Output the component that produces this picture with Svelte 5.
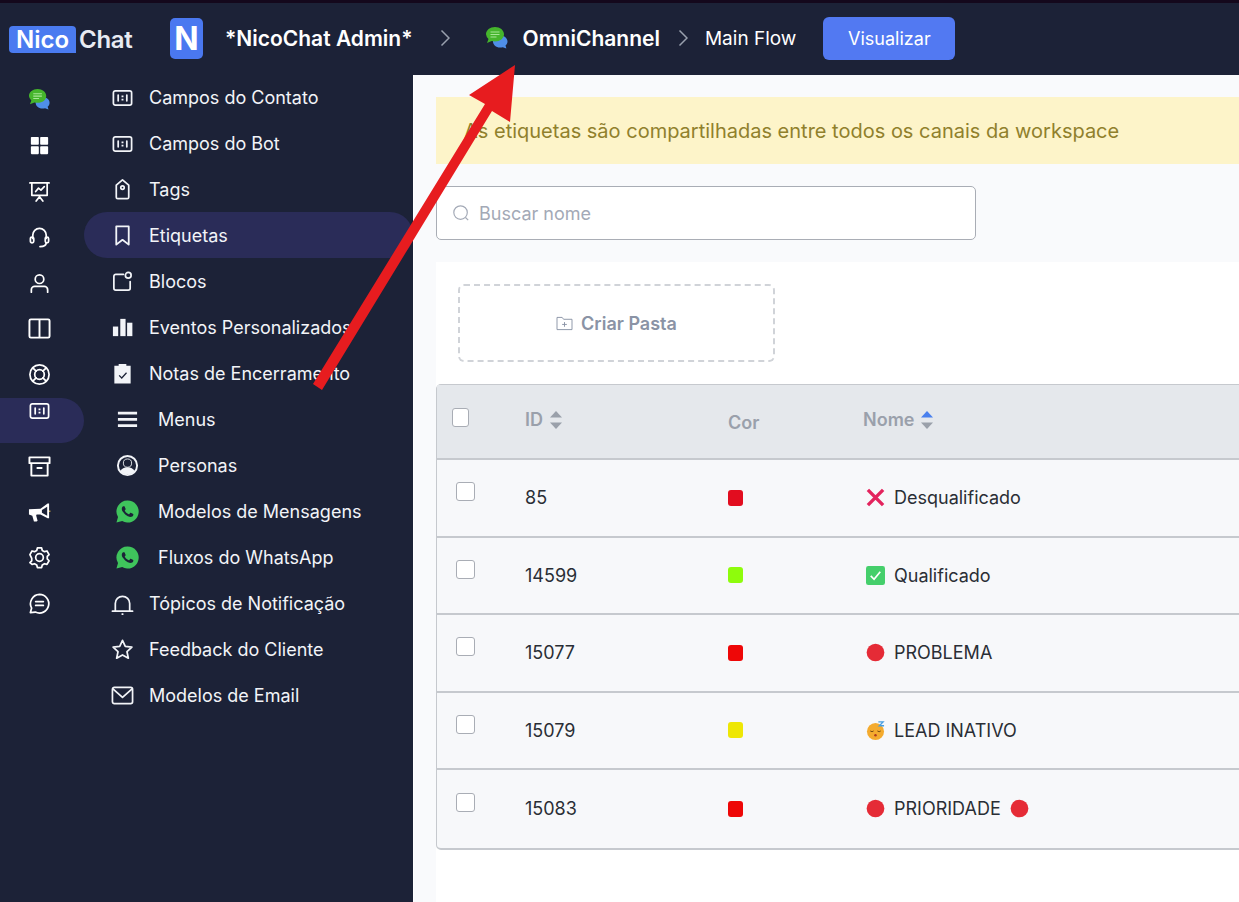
<script>
  const s = 'fill="none" stroke="currentColor" stroke-width="1.8" stroke-linecap="round" stroke-linejoin="round"';
  const fieldBox = `<g ${s}><rect x="2.5" y="5" width="19" height="15" rx="2"/><path d="M7.5 9.5v6M16.5 9.5v6" /></g><path fill="currentColor" d="M11 10h2v1.8h-2zM11 13.4h2v1.8h-2z"/>`;
  const chats = `<path fill="#4f8fe8" d="M15 9.5c4.4 0 7.5 2.700 7.500 6 0 1.700-.8 3.100-2 4.100l.9 2.900-3.600-1.300c-.9.2-1.800.3-2.800.3-4.100 0-7-2.700-7-6s2.600-6 7-6z"/><path fill="#45b52c" d="M10 1c5 0 9 3.200 9 7.300s-4 7.200-9 7.200c-1.200 0-2.300-.2-3.300-.5L2 17l1.500-4A7 7 0 0 1 1 8.300C1 4.200 5 1 10 1z"/><path stroke="#a6e596" stroke-width="1.100" d="M5.500 6h9M5.500 8.500h9M5.500 11h6"/>`;

  const icons = {
    chats,
    grid: `<g fill="currentColor"><rect x="3" y="3" width="8.300" height="8.300" rx=".8"/><rect x="12.700" y="3" width="8.300" height="8.300" rx=".8"/><rect x="3" y="12.700" width="8.300" height="8.300" rx=".8"/><rect x="12.700" y="12.700" width="8.300" height="8.300" rx=".8"/></g>`,
    board: `<g ${s}><path d="M2 3h20M4 3v13h16V3M12 16v1.500M8.500 22l3.500-4.500 3.500 4.500M8 12l3-3.500 2.500 2L17 7"/></g>`,
    headset: `<g ${s}><path d="M5 13V9.500a7 7 0 0 1 14 0V13M19 17.500c0 2.500-2.500 4-6.500 4"/><rect x="2.500" y="11.500" width="3.500" height="6" rx="1.700"/><rect x="18" y="11.500" width="3.500" height="6" rx="1.700"/></g>`,
    user: `<g ${s}><circle cx="12" cy="7.500" r="4.500"/><path d="M3.500 21v-2.500a3.500 3.500 0 0 1 3.500-3.500h10a3.500 3.500 0 0 1 3.500 3.500V21"/></g>`,
    columns: `<g fill="none" stroke="currentColor" stroke-width="2"><rect x="1.500" y="2.500" width="21" height="19" rx="1.500"/><path d="M12 2.500v19"/></g>`,
    buoy: `<g ${s}><circle cx="12" cy="12" r="10"/><circle cx="12" cy="12" r="5"/><path d="M5 5l3.500 3.500M19 5l-3.500 3.500M5 19l3.500-3.500M19 19l-3.500-3.500"/></g>`,
    field: fieldBox,
    archive: `<g fill="none" stroke="currentColor" stroke-width="2" stroke-linejoin="round"><path d="M1.500 2.500h21v6h-21zM3.500 8.500v13h17v-13M9 13.500h6"/></g>`,
    megaphone: `<path fill="currentColor" d="M1 8.500l12-.5 7.500-5.500h1.500V18h-1.500L13 14H9l-.5 1 1.500 5.500-1 1H6.200L4.500 15.500 1 14z"/><path fill="#1c2237" d="M14.500 9.500l5.500-3.500v9.500l-5.500-3.300z"/><path stroke="#e0b64a" stroke-width="1.200" d="M22.700 10v1.500"/>`,
    gear: `<g ${s}><circle cx="12" cy="12" r="4"/><path d="M9.800 2.500h4.400l.7 2.600 2.300 1.300 2.600-.7 2.200 3.800-1.900 1.900v2.600l1.900 1.900-2.200 3.800-2.600-.7-2.300 1.300-.7 2.700H9.800l-.7-2.700-2.300-1.300-2.600.7L2 17.900l1.900-1.900v-2.600L2 9.500l2.200-3.800 2.600.7 2.300-1.300z" transform="translate(0 -.5)"/></g>`,
    chat: `<g ${s}><path d="M12 2.500a9.700 9.700 0 1 1-4.300 18.400L2.500 21.500l1.300-4.700A9.700 9.700 0 0 1 12 2.500z"/><path d="M8 10h8M8 14h8"/></g>`,
    tag: `<g ${s}><path d="M12 2l6.500 5.500V20a1.500 1.500 0 0 1-1.500 1.500H7A1.500 1.500 0 0 1 5.500 20V7.500z" /><circle cx="12" cy="10" r="1.800"/></g>`,
    bookmark: `<path d="M5.500 2.500h13v19L12 16.500l-6.500 5z" fill="none" stroke="currentColor" stroke-width="1.900" stroke-linejoin="round"/>`,
    block: `<g ${s}><path d="M13 4.500H5a2 2 0 0 0-2 2V19a2 2 0 0 0 2 2h13a2 2 0 0 0 2-2v-7"/><circle cx="18" cy="5.500" r="3"/></g>`,
    bars: `<g fill="currentColor"><rect x="2" y="11" width="5.500" height="10"/><rect x="9.700" y="3" width="5.500" height="18"/><rect x="16.800" y="7" width="5.500" height="14"/></g>`,
    clipboard: `<path fill="currentColor" d="M8 2h8v2h4.500v18.500h-17V4H8z"/><path d="M8.500 14l2.700 2.700 5-5.500" fill="none" stroke="#1c2237" stroke-width="1.300"/>`,
    menu: `<path fill="currentColor" d="M2 4h20v2.800H2zM2 10.500h20v2.800H2zM2 17h20v2.800H2z"/>`,
    persona: `<circle cx="12" cy="12" r="10" fill="none" stroke="currentColor" stroke-width="2"/><circle cx="12" cy="9.500" r="4.300" fill="#1c2237" stroke="currentColor" stroke-width=".9"/><path fill="currentColor" d="M4.500 18c1.500-3 4-4.300 7.500-4.300s6 1.300 7.500 4.300a10 10 0 0 1-15 0z"/>`,
    whatsapp: `<path fill="#3fc45c" d="M12 .5a11.500 11.500 0 0 0-9.900 17.300L.5 23.500l6-1.500A11.500 11.500 0 1 0 12 .5z"/><path fill="#1c2237" d="M17.500 14.400c-.3-.15-1.760-.87-2.030-.97-.27-.1-.47-.15-.67.15-.2.3-.77.97-.94 1.160-.17.2-.35.22-.64.07-.3-.15-1.260-.46-2.390-1.470-.88-.79-1.480-1.760-1.650-2.060-.17-.3-.02-.46.13-.6.13-.14.3-.35.450-.52.15-.18.2-.3.3-.5.1-.2.05-.37-.03-.52-.07-.15-.67-1.610-.92-2.200-.24-.58-.49-.5-.67-.51h-.57c-.2 0-.52.07-.79.37-.27.3-1.040 1.020-1.040 2.480 0 1.460 1.070 2.880 1.210 3.070.15.2 2.100 3.200 5.080 4.490.71.31 1.260.49 1.700.63.71.23 1.360.2 1.870.12.57-.09 1.760-.72 2-1.410.25-.7.25-1.290.17-1.410-.07-.13-.27-.2-.57-.35z"/>`,
    bell: `<g ${s}><path d="M1.500 20h21M4.500 20v-8a7.500 7.500 0 0 1 15 0v8M11.700 23h.6"/></g>`,
    star: `<path d="M12 2.500l2.900 6.300 6.900.8-5.100 4.700 1.400 6.800-6.100-3.400-6.100 3.400 1.400-6.800-5.100-4.700 6.900-.8z" ${s}/>`,
    mail: `<g ${s}><rect x="1.500" y="3.500" width="21" height="17" rx="2"/><path d="M2 5l10 9 10-9"/></g>`,
  };

  const rail = ['chats','grid','board','headset','user','columns','buoy','field','archive','megaphone','gear','chat'];

  const nav = [
    { label: 'Campos do Contato', icon: 'field' },
    { label: 'Campos do Bot', icon: 'field' },
    { label: 'Tags', icon: 'tag' },
    { label: 'Etiquetas', icon: 'bookmark', active: true },
    { label: 'Blocos', icon: 'block' },
    { label: 'Eventos Personalizados', icon: 'bars' },
    { label: 'Notas de Encerramento', icon: 'clipboard' },
    { label: 'Menus', icon: 'menu', wide: true },
    { label: 'Personas', icon: 'persona', wide: true },
    { label: 'Modelos de Mensagens', icon: 'whatsapp', wide: true },
    { label: 'Fluxos do WhatsApp', icon: 'whatsapp', wide: true },
    { label: 'Tópicos de Notificação', icon: 'bell' },
    { label: 'Feedback do Cliente', icon: 'star' },
    { label: 'Modelos de Email', icon: 'mail' },
  ];

  const rows = [
    { id: '85', color: '#e20d1f', emoji: 'cross', name: 'Desqualificado' },
    { id: '14599', color: '#8efc0c', emoji: 'check', name: 'Qualificado' },
    { id: '15077', color: '#ee0707', emoji: 'stop', name: 'PROBLEMA' },
    { id: '15079', color: '#eee705', emoji: 'sleep', name: 'LEAD INATIVO' },
    { id: '15083', color: '#ee0707', emoji: 'stop', name: 'PRIORIDADE', after: 'stop' },
  ];
</script>

{#snippet emoji(kind)}
  <svg class="emoji" viewBox="0 0 20 20">
    {#if kind === 'cross'}
      <path d="M2 2l16 16M18 2L2 18" stroke="#e3235d" stroke-width="3.600" />
    {:else if kind === 'check'}
      <rect width="20" height="20" rx="2.500" fill="#45cf6b" />
      <path d="M5 10.500l3.500 3.500 6.500-8" fill="none" stroke="#fff" stroke-width="1.800" />
    {:else if kind === 'stop'}
      <circle cx="10" cy="10" r="9.300" fill="#e52b36" />
    {:else}
      <circle cx="10" cy="11" r="9" fill="#f4ab2e" />
      <path d="M4.500 10.500q2 1.500 3.500 0M12 10.500q2 1.500 3.500 0" fill="none" stroke="#6b4310" stroke-width="1" />
      <circle cx="10" cy="15" r="1.300" fill="#b03a1e" />
      <path d="M13 1h5l-4 4h5" fill="none" stroke="#4a9fe0" stroke-width="1.400" />
    {/if}
  </svg>
{/snippet}

{#snippet sortIcon(active)}
  <svg class="sort" viewBox="0 0 12 18">
    <path d="M6 0l6 6.500H0z" fill={active ? '#4a80ee' : '#9aa0aa'} />
    <path d="M6 18l6-6.500H0z" fill="#9aa0aa" />
  </svg>
{/snippet}

<div class="page">
  <header class="topbar">
    <div class="logo">
      <span class="logo-nico">Nico</span>
      <span class="logo-chat">Chat</span>
    </div>
    <div class="tile">N</div>
    <div class="workspace">*NicoChat Admin*</div>
    <svg class="chevron first" viewBox="0 0 10 18"><path d="M1.500 1.500L9 9l-7.500 7.500" /></svg>
    <svg class="flow-icon" viewBox="0 0 24 24">{@html icons.chats}</svg>
    <div class="flow-name">OmniChannel</div>
    <svg class="chevron" viewBox="0 0 10 18"><path d="M1.500 1.500L9 9l-7.500 7.500" /></svg>
    <div class="flow-page">Main Flow</div>
    <button class="preview">Visualizar</button>
  </header>

  <div class="body">
    <nav class="rail">
      {#each rail as name, i}
        <div class="rail-item" class:active={i === 7}>
          <svg viewBox="0 0 24 24">{@html icons[name]}</svg>
        </div>
      {/each}
    </nav>

    <nav class="subnav">
      {#each nav as item}
        <div class="nav-item" class:active={item.active} class:wide={item.wide}>
          <svg viewBox="0 0 24 24">{@html icons[item.icon]}</svg>
          <span>{item.label}</span>
        </div>
      {/each}
    </nav>

    <main class="content">
      <div class="notice">As etiquetas são compartilhadas entre todos os canais da workspace</div>

      <div class="search">
        <svg viewBox="0 0 20 20"><circle cx="9.500" cy="9.500" r="7.500" /><path d="M15 15l3 3" /></svg>
        <span>Buscar nome</span>
      </div>

      <section class="panel">
        <div class="create-folder">
          <svg viewBox="0 0 18 16"><path d="M1 1.500h5.500l1.500 2h9V14.500H1z" /><path d="M9 6.500v5M6.500 9h5" /></svg>
          <span>Criar Pasta</span>
        </div>

        <div class="table">
          <div class="row head">
            <div class="check-cell"><span class="checkbox small"></span></div>
            <div class="th">ID {@render sortIcon(false)}</div>
            <div class="th cor">Cor</div>
            <div class="th">Nome {@render sortIcon(true)}</div>
          </div>
          {#each rows as row}
            <div class="row">
              <div class="check-cell"><span class="checkbox"></span></div>
              <div>{row.id}</div>
              <div><span class="swatch" style="background: {row.color}"></span></div>
              <div class="name">
                {@render emoji(row.emoji)}
                <span>{row.name}</span>
                {#if row.after}{@render emoji(row.after)}{/if}
              </div>
            </div>
          {/each}
        </div>
      </section>
    </main>
  </div>

  <svg class="arrow" width="1239" height="902" viewBox="0 0 1239 902">
    <polygon points="515,65 510,122 492,111 322,390 313,384 485,104 469,95" fill="#e71c1f" />
  </svg>
</div>

<style>
  :global(body) {
    margin: 0;
    background: #fff;
    overflow: hidden;
  }

  .page {
    position: relative;
    width: 1239px;
    height: 902px;
    overflow: hidden;
    font-family: Inter, "Liberation Sans", sans-serif;
    color: #2a2e35;
  }

  .arrow {
    position: absolute;
    left: 0;
    top: 0;
    pointer-events: none;
  }

  .topbar {
    box-sizing: border-box;
    height: 75px;
    border-top: 3px solid #14081c;
    background: #1c2237;
    display: flex;
    align-items: center;
    color: #fff;
    padding-left: 9px;
    padding-bottom: 2px;
  }

  .logo {
    display: flex;
    align-items: center;
    width: 131px;
    margin-top: 3px;
  }

  .logo-nico {
    box-sizing: border-box;
    width: 67px;
    height: 27px;
    background: #4a7bf0;
    border-radius: 4px 4px 0 4px;
    font-size: 24px;
    font-weight: 600;
    line-height: 27px;
    text-align: center;
  }

  .logo-chat {
    margin-left: 3px;
    font-size: 24px;
    font-weight: 600;
    color: #e8ebf2;
    letter-spacing: -0.3px;
  }

  .tile {
    margin-left: 30px;
    width: 33px;
    height: 41px;
    border-radius: 5px;
    background: #4a78f0;
    font-size: 32px;
    font-weight: 700;
    line-height: 41px;
    text-align: center;
  }

  .workspace {
    margin-left: 22px;
    font-size: 21px;
    font-weight: 600;
  }

  .chevron {
    width: 10px;
    height: 18px;
    fill: none;
    stroke: #99a0ae;
    stroke-width: 1.500;
    margin-left: 18px;
  }

  .chevron.first {
    margin-left: 27px;
  }

  .flow-icon {
    width: 24px;
    height: 24px;
    margin-left: 35px;
  }

  .flow-name {
    margin-left: 14px;
    font-size: 21px;
    font-weight: 600;
  }

  .flow-page {
    margin-left: 17px;
    font-size: 19px;
  }

  .preview {
    margin-left: 27px;
    width: 132px;
    height: 43px;
    border: none;
    border-radius: 6px;
    background: #5279f2;
    color: #fff;
    font-family: inherit;
    font-size: 18px;
  }

  .body {
    display: flex;
    height: 827px;
  }

  .rail {
    width: 84px;
    flex: none;
    background: #1c2237;
    padding-top: 2px;
    box-sizing: border-box;
  }

  .rail-item {
    height: 45.800px;
    display: flex;
    align-items: center;
    justify-content: center;
    padding-left: 0;
    margin-left: -6px;
    color: #fff;
    border-radius: 0 23px 23px 0;
  }

  .rail-item svg {
    width: 23px;
    height: 23px;
  }

  .rail-item.active {
    background: #2a2c58;
    margin-left: 0;
    padding-right: 6px;
    align-items: flex-start;
    padding-top: 1px;
    height: 44.800px;
  }

  .subnav {
    width: 329px;
    flex: none;
    background: #1c2237;
    margin-top: -1px;
  }

  .nav-item {
    height: 46px;
    display: flex;
    align-items: center;
    padding-left: 27px;
    color: #f2f4f8;
    font-size: 18px;
    border-radius: 23px;
  }

  .nav-item.active {
    background: #2a2c58;
  }

  .nav-item svg {
    width: 23px;
    height: 23px;
    flex: none;
    margin-right: 15px;
  }

  .nav-item.wide svg {
    margin-left: 5px;
    margin-right: 19px;
  }

  .content {
    flex: 1;
    min-width: 0;
    border-left: 1px solid #fff;
    background: #f9fafc;
    padding: 22px 0 0 22px;
    box-sizing: border-box;
  }

  .notice {
    height: 67px;
    margin-right: -10px;
    box-sizing: border-box;
    padding-left: 28px;
    display: flex;
    align-items: center;
    background: #fdf4c9;
    color: #90802c;
    font-size: 20px;
  }

  .search {
    margin-top: 22px;
    width: 540px;
    height: 54px;
    box-sizing: border-box;
    display: flex;
    align-items: center;
    gap: 9px;
    padding-left: 15px;
    background: #fff;
    border: 1px solid #a9adb5;
    border-radius: 5px;
    color: #a3a9b6;
    font-size: 18px;
  }

  .search svg {
    width: 18px;
    height: 18px;
    fill: none;
    stroke: #a3a9b6;
    stroke-width: 1.300;
  }

  .panel {
    margin-top: 22px;
    margin-right: -10px;
    height: 640px;
    background: #fff;
    padding-top: 22px;
    box-sizing: border-box;
  }

  .create-folder {
    margin-left: 22px;
    width: 317px;
    height: 78px;
    box-sizing: border-box;
    display: flex;
    align-items: center;
    justify-content: center;
    gap: 8px;
    border: 2px dashed #d0d3d8;
    border-radius: 6px;
    color: #8a93a5;
    font-size: 18px;
    font-weight: 600;
  }

  .create-folder svg {
    width: 17px;
    height: 15px;
    fill: none;
    stroke: #8a93a5;
    stroke-width: 1;
  }

  .table {
    margin-top: 22px;
    border: 1px solid #c6c9ce;
    border-bottom-width: 2px;
    border-radius: 5px 0 0 5px;
    background: #f7f8fa;
    font-size: 18px;
    color: #2a2e35;
  }

  .row {
    display: grid;
    grid-template-columns: 88px 203px 135px 1fr;
    align-items: center;
    height: 77.500px;
    box-sizing: border-box;
    border-bottom: 2px solid #c6c9ce;
  }

  .row:last-child {
    border-bottom: none;
  }

  .row.head {
    height: 75px;
    background: #e5e8ec;
    color: #9aa0ab;
    font-weight: 600;
  }

  .th {
    display: flex;
    align-items: center;
    gap: 7px;
    margin-top: -4px;
  }

  .th.cor {
    margin-top: 2px;
  }

  .sort {
    width: 12px;
    height: 18px;
  }

  .check-cell {
    padding-left: 19px;
    display: flex;
    margin-top: -12px;
  }

  .head .check-cell {
    padding-left: 15px;
    margin-top: -9px;
  }

  .checkbox {
    width: 19px;
    height: 19px;
    box-sizing: border-box;
    background: #fff;
    border: 1px solid #a9adb5;
    border-radius: 3px;
  }

  .checkbox.small {
    width: 17px;
    height: 19px;
  }

  .swatch {
    display: block;
    width: 15px;
    height: 16px;
    border-radius: 3px;
  }

  .name {
    display: flex;
    align-items: center;
    gap: 9px;
    margin-left: 3px;
  }

  .emoji {
    width: 19px;
    height: 19px;
    flex: none;
  }
</style>
